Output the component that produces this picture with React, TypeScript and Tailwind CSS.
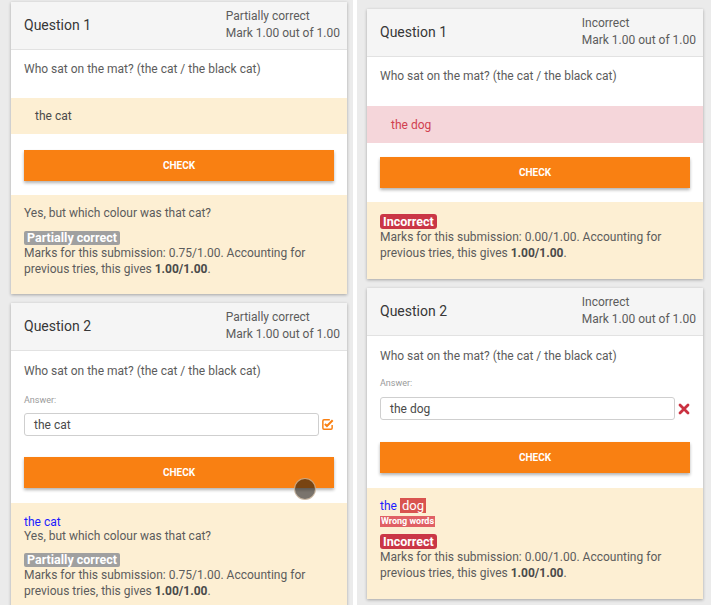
import React from "react";

const font = { fontFamily: "Roboto, 'Noto Sans', sans-serif" };

function CheckSquare() {
  return (
    <svg width="13" height="13" viewBox="0 0 14 14" className="ml-[2px] shrink-0">
      <path d="M9.5 2H3.2C2.5 2 2 2.5 2 3.2v7.6c0 .7.5 1.2 1.2 1.2h7.6c.7 0 1.2-.5 1.2-1.2V7.5" fill="none" stroke="#f98012" strokeWidth="1.6" />
      <path d="M4.2 6.4l2.2 2.2 6.2-6.2" fill="none" stroke="#f98012" strokeWidth="2.2" />
    </svg>
  );
}

function Cross() {
  return (
    <svg width="12" height="12" viewBox="0 0 12 12" className="ml-[3px] shrink-0">
      <path d="M2 2l8 8M10 2l-8 8" stroke="#ca3140" strokeWidth="2.8" strokeLinecap="round" />
    </svg>
  );
}

function Header({ n, state }: { n: number; state: string }) {
  return (
    <div className="h-[48px] bg-[#f5f5f5] border-b border-[#e2e2e2] flex items-center justify-between pl-[13px] pr-[7px]">
      <div className="text-[14px] text-[#373737]">Question {n}</div>
      <div className="text-[12px] leading-[17px] text-[#5c5c5c] whitespace-nowrap -mt-[1px]">
        <div>{state}</div>
        <div>Mark 1.00 out of 1.00</div>
      </div>
    </div>
  );
}

function CheckButton({ mt }: { mt: string }) {
  return (
    <div className={`mx-[13px] ${mt} h-[31px] bg-[#f98012] shadow-[0_2px_3px_rgba(0,0,0,0.3)] flex items-center justify-center text-white text-[10px] font-bold`}>
      CHECK
    </div>
  );
}

function Marks({ sub }: { sub: string }) {
  return (
    <div className="text-[12px] leading-[16px] text-[#5c5c5c]">
      Marks for this submission: {sub}/1.00. Accounting for
      <br />
      previous tries, this gives <b className="font-bold text-[#4a4a4a]">1.00/1.00</b>.
    </div>
  );
}

function PartialBadge() {
  return (
    <span className="inline-block bg-[#a0a0a0] text-white font-bold text-[12.5px] leading-[14px] px-[3px] rounded-[2px]">
      Partially correct
    </span>
  );
}

function IncorrectBadge() {
  return (
    <span className="inline-block bg-[#ca3646] text-white font-bold text-[12.5px] leading-[15px] px-[3px] rounded-[3px]">
      Incorrect
    </span>
  );
}

function Question() {
  return <div className="text-[12px] leading-[16px] text-[#5c5c5c]">Who sat on the mat? (the cat / the black cat)</div>;
}

function Card({ children, className = "" }: { children: React.ReactNode; className?: string }) {
  return <div className={`bg-white shadow-[0_1px_3px_rgba(0,0,0,0.3)] ${className}`}>{children}</div>;
}

export default function App() {
  return (
    <div className="w-[711px] h-[605px] overflow-hidden bg-white flex" style={font}>
      {/* Left */}
      <div className="w-[353px] shrink-0 h-full bg-[#ebebeb] pl-[11px] pr-[6px] pt-[2px] flex flex-col gap-[9px]">
        <Card>
          <Header n={1} state="Partially correct" />
          <div className="pt-[11px] px-[13px]">
            <Question />
          </div>
          <div className="mt-[21px] h-[36px] bg-[#fdefd3] flex items-center pl-[24px] text-[12px] text-[#4a4a4a]">the cat</div>
          <CheckButton mt="mt-[16px]" />
          <div className="mt-[14px] bg-[#fdefd3] px-[13px] pt-[10px] pb-[17px]">
            <div className="text-[12px] leading-[16px] text-[#5c5c5c]">Yes, but which colour was that cat?</div>
            <div className="mt-[9px] leading-[14px]">
              <PartialBadge />
            </div>
            <Marks sub="0.75" />
          </div>
        </Card>
        <Card className="relative">
          <Header n={2} state="Partially correct" />
          <div className="pt-[12px] px-[13px]">
            <Question />
            <div className="mt-[15px] text-[9px] leading-[12px] text-[#9a9a9a]">Answer:</div>
            <div className="mt-[7px] flex items-center">
              <div className="w-[299px] h-[23px] border border-[#cfcfcf] rounded-[3px] flex items-center pl-[9px] text-[12px] text-[#4a4a4a]">the cat</div>
              <CheckSquare />
            </div>
          </div>
          <CheckButton mt="mt-[21px]" />
          <div className="mt-[15px] bg-[#fdefd3] px-[13px] pt-[12px] pb-[16px]">
            <div className="text-[12px] leading-[14px] text-[#1c1cff]">the cat</div>
            <div className="text-[12px] leading-[14px] text-[#5c5c5c]">Yes, but which colour was that cat?</div>
            <div className="mt-[9px] leading-[14px]">
              <PartialBadge />
            </div>
            <Marks sub="0.75" />
          </div>
          <div className="absolute left-[283px] top-[175px] w-[22px] h-[22px] rounded-full bg-[rgba(40,30,20,0.62)] border border-[rgba(255,230,200,0.6)]" />
        </Card>
      </div>
      <div className="w-[4px] shrink-0 h-full bg-white" />
      {/* Right */}
      <div className="w-[354px] shrink-0 h-full bg-[#ebebeb] pl-[10px] pr-[8px] pt-[9px] flex flex-col gap-[9px]">
        <Card>
          <Header n={1} state="Incorrect" />
          <div className="pt-[11px] px-[13px]">
            <Question />
          </div>
          <div className="mt-[22px] h-[37px] bg-[#f5d6da] flex items-center pl-[24px] text-[12px] text-[#d1404f]">the dog</div>
          <CheckButton mt="mt-[14px]" />
          <div className="mt-[14px] bg-[#fdefd3] px-[13px] pt-[11px] pb-[18px]">
            <div className="leading-[15px]">
              <IncorrectBadge />
            </div>
            <Marks sub="0.00" />
          </div>
        </Card>
        <Card>
          <Header n={2} state="Incorrect" />
          <div className="pt-[12px] px-[13px]">
            <Question />
            <div className="mt-[13px] text-[9px] leading-[12px] text-[#9a9a9a]">Answer:</div>
            <div className="mt-[8px] flex items-center">
              <div className="w-[299px] h-[23px] border border-[#cfcfcf] rounded-[3px] flex items-center pl-[9px] text-[12px] text-[#4a4a4a]">the dog</div>
              <Cross />
            </div>
          </div>
          <CheckButton mt="mt-[22px]" />
          <div className="mt-[15px] bg-[#fdefd3] px-[13px] pt-[10px] pb-[18px]">
            <div className="flex items-center h-[15px] text-[12px] text-[#1c1cff]">
              <span>the</span>
              <span className="ml-[3px] inline-block bg-[#d9534f] text-white px-[2px] text-[13px] leading-[15px]">dog</span>
            </div>
            <div className="mt-[3px] h-[11px] flex items-center">
              <span className="bg-[#e06065] text-white text-[9px] leading-[11px] font-bold px-[1px]">Wrong words</span>
            </div>
            <div className="mt-[7px] h-[15px] flex items-center">
              <IncorrectBadge />
            </div>
            <Marks sub="0.00" />
          </div>
        </Card>
      </div>
    </div>
  );
}
